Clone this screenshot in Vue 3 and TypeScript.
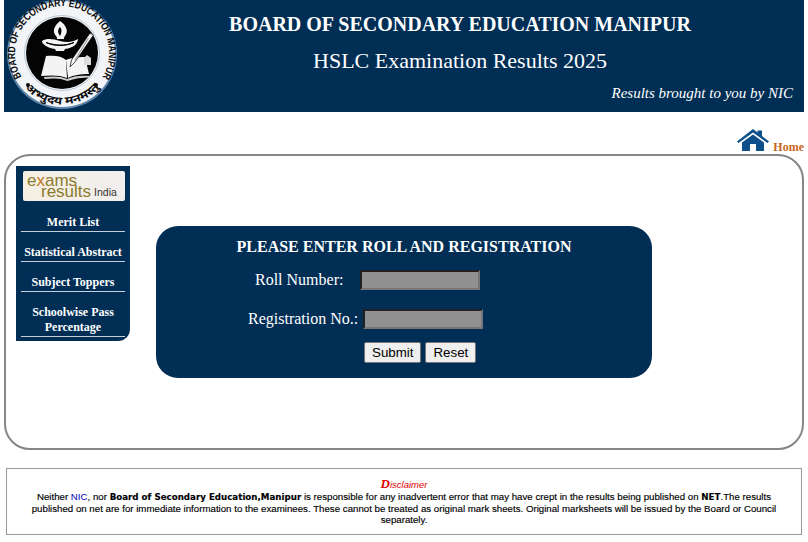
<script setup lang="ts">
const menu: string[] = ['Merit List', 'Statistical Abstract', 'Subject Toppers', 'Schoolwise Pass Percentage']
</script>

<template>
  <div class="page">
    <header class="banner">
      <svg class="crest" width="114" height="110" viewBox="0 0 114 110">
        <defs>
          <path id="arcTop" d="M 17.5 77 A 47 47 0 1 1 98.5 77" />
          <path id="arcBottom" d="M 15 80 A 50 50 0 0 0 101 80" />
        </defs>
        <circle cx="58" cy="54" r="55" fill="#5f86ad" />
        <circle cx="58" cy="54" r="53" fill="#f2f4f7" />
        <circle cx="58" cy="53" r="36" fill="#040404" />
        <circle cx="58" cy="53" r="37.500" fill="none" stroke="#b9c6d6" stroke-width="1" />
        <text fill="#0b0b0b" font-family="Liberation Sans, sans-serif" font-weight="bold" font-size="10.500"><textPath href="#arcTop" textLength="198" lengthAdjust="spacingAndGlyphs">BOARD OF SECONDARY EDUCATION MANIPUR</textPath></text>
        <text fill="#0b0b0b" font-family="Noto Sans, DejaVu Sans, sans-serif" font-weight="bold" font-size="11"><textPath href="#arcBottom" startOffset="10" textLength="84" lengthAdjust="spacingAndGlyphs">अभ्युदय मनमस्तु</textPath></text>
        <circle cx="24" cy="85" r="2" fill="#0b0b0b" />
        <circle cx="92" cy="85" r="2" fill="#0b0b0b" />
        <path d="M56 21c-6 5-8 10-4 15 1 1 1 2 1 3h7c0-1 0-2 1-3 4-5 1-11-5-15z" fill="#f4f4f4" />
        <path d="M56 27c-2 2-3 5 0 9 2-4 2-7 0-9z" fill="#040404" />
        <path d="M38 41c5-3 11-2 18 0s13 1 18-2c0 4-4 9-13 10l-1 2H52l-1-2c-8-1-13-5-13-8z" fill="#f4f4f4" />
        <path d="M42 42.500c8 4 20 4 28 0-6 2-9 2.500-14 2.500s-9-1-14-2.500z" fill="#040404" stroke="#040404" />
        <path d="M42 56c9-1 16 0 20 4l1 18c-7-3-15-3-26-2z" fill="#f4f4f4" />
        <path d="M62 60c4-2 10-3 19-3l4 17c-9 0-15 1-21 4z" fill="#f4f4f4" />
        <path d="M40 77c9-1 17-1 23 2 6-3 14-4 23-3l.5 1.500c-9 0-16 1-23 3.500-7-3-14-3-23-2z" fill="#cfcfcf" />
        <path d="M86 33l3.500 2L71 62l-5 5 1.500-7z" fill="#f4f4f4" stroke="#040404" stroke-width=".7" />
        <path d="M84.500 38 71 60" stroke="#777" stroke-width=".8" fill="none" />
        <path d="M80 58l3-3 4 3v7h-7z" fill="#dcdcdc" />
      </svg>
      <div class="titles">
        <h1>BOARD OF SECONDARY EDUCATION MANIPUR</h1>
        <h2>HSLC Examination Results 2025</h2>
        <p>Results brought to you by NIC</p>
      </div>
    </header>

    <div class="home-row">
      <svg width="32" height="23" viewBox="0 0 32 23">
        <path d="M0 12.500 16 0l4.500 3.500V1.500h4.500v5.500L32 12.500l-1.500 1.500L16 3.500 1.500 14z" fill="#0c4f8a" />
        <path d="M5 13.500 16 5.500l11 8V22H19v-7h-6v7H5z" fill="#0c4f8a" />
      </svg>
      <span class="home-link">Home</span>
    </div>

    <main class="panel">
      <nav class="side">
        <div class="brand">
          <div class="brand-word">
            <span class="w1">e<i class="x">x</i>ams</span>
            <span class="w2">results</span>
          </div>
          <span class="w3">India</span>
        </div>
        <a v-for="m in menu" :key="m" class="side-link">{{ m }}</a>
      </nav>

      <form class="roll-form" @submit.prevent>
        <h3>PLEASE ENTER ROLL AND REGISTRATION</h3>
        <div class="field first">
          <label for="roll">Roll Number:</label>
          <input id="roll" type="text" />
        </div>
        <div class="field second">
          <label for="reg">Registration No.:</label>
          <input id="reg" type="text" />
        </div>
        <div class="actions">
          <button type="submit">Submit</button>
          <button type="reset">Reset</button>
        </div>
      </form>
    </main>

    <footer class="disclaimer">
      <div class="dis-title"><span class="big">D</span>isclaimer</div>
      <p>
        Neither <span class="nic">NIC</span>, nor <b class="wide">Board of Secondary Education,Manipur</b> is responsible for any inadvertent error that may have crept in the results being published on <b class="wide">NET</b>.The results published on net are for immediate information to the examinees. These cannot be treated as original mark sheets. Original marksheets will be issued by the Board or Council separately.
      </p>
    </footer>
  </div>
</template>

<style scoped>
.page {
  width: 808px;
  height: 542px;
  overflow: hidden;
  background: #fff;
  font-family: "Liberation Serif", "Times New Roman", serif;
}
.banner {
  margin: 0 4px;
  height: 112px;
  background: #002e55;
  display: flex;
  color: #fff;
}
.crest {
  flex: none;
}
.titles {
  flex: 1;
  padding-top: 11px;
  text-align: center;
}
h1 {
  margin: 0;
  padding-right: 2px;
  font-size: 20px;
  line-height: 26px;
  font-weight: bold;
}
h2 {
  margin: 10px 0 0;
  padding-right: 2px;
  font-size: 22px;
  line-height: 28px;
  font-weight: normal;
}
.titles p {
  margin: 9px 11px 0 0;
  text-align: right;
  font-size: 15px;
  line-height: 18px;
  font-style: italic;
}
.home-row {
  height: 42px;
  display: flex;
  justify-content: flex-end;
  align-items: flex-end;
  padding-right: 4px;
  gap: 4px;
}
.home-row svg {
  margin-bottom: 2px;
}
.home-link {
  color: #c8651b;
  font-size: 12px;
  font-weight: bold;
  line-height: 14px;
}
.panel {
  margin: 0 4px;
  height: 296px;
  box-sizing: border-box;
  border: 2px solid #888489;
  border-radius: 26px;
  display: flex;
  align-items: flex-start;
  padding: 10px;
}
.side {
  width: 114px;
  height: 175px;
  box-sizing: border-box;
  flex: none;
  background: #002e55;
  border-radius: 0 0 12px 0;
  padding: 5px 5px 0;
  text-align: center;
}
.brand {
  height: 30px;
  margin: 0 0 6px 2px;
  background: linear-gradient(90deg, #f5efe2, #f1efee);
  border-radius: 2px;
  display: flex;
  align-items: flex-end;
  padding-left: 4px;
  box-sizing: border-box;
  font-family: "Liberation Sans", Arial, sans-serif;
}
.brand-word {
  display: flex;
  flex-direction: column;
  text-align: left;
  padding-bottom: 4px;
}
.w1, .w2 {
  color: #8d7a2e;
  font-size: 17px;
  line-height: 11px;
}
.x {
  color: #c2761f;
  font-style: normal;
}
.w2 {
  margin-left: 14px;
}
.w3 {
  color: #333;
  font-size: 10.500px;
  line-height: 10px;
  margin-left: 3px;
  padding-bottom: 4px;
}
.side-link {
  display: block;
  color: #fff;
  font-size: 12px;
  font-weight: bold;
  line-height: 15px;
  padding-top: 8px;
  padding-bottom: 1px;
  margin-bottom: 5px;
  border-bottom: 1px solid #c6d0da;
}
.roll-form {
  width: 496px;
  height: 152px;
  margin: 60px 0 0 26px;
  box-sizing: border-box;
  background: #002e55;
  border-radius: 22px;
  color: #fff;
  padding-top: 12px;
}
h3 {
  margin: 0;
  text-align: center;
  font-size: 16px;
  line-height: 18px;
  font-weight: bold;
}
.field {
  display: flex;
  align-items: center;
  font-size: 16px;
}
.field label {
  line-height: 20px;
}
.first {
  margin-top: 14px;
  padding-left: 99px;
  gap: 17px;
}
.second {
  margin-top: 19px;
  padding-left: 92px;
  gap: 5px;
}
input {
  width: 120px;
  height: 20px;
  box-sizing: border-box;
  background: #919191;
  border: 2px inset #767676;
  padding: 0;
}
.actions {
  margin-top: 13px;
  padding-left: 208px;
  display: flex;
  gap: 4px;
}
button {
  height: 21px;
  padding: 0 7px;
  background: #efefef;
  border: 1px solid #767676;
  border-radius: 2px;
  font-family: "Liberation Sans", Arial, sans-serif;
  font-size: 13.330px;
  color: #000;
}
.disclaimer {
  margin: 18px 6px 0;
  height: 67px;
  box-sizing: border-box;
  border: 1px solid #999;
  padding-top: 8px;
  text-align: center;
  font-family: "Liberation Sans", Arial, sans-serif;
  font-size: 9.700px;
  line-height: 11px;
  color: #000;
}
.dis-title {
  color: #e00000;
  font-family: "Liberation Sans", sans-serif;
  font-style: italic;
  line-height: 13px;
  font-size: 9.500px;
}
.big {
  font-family: "Liberation Serif", serif;
  font-weight: bold;
  font-size: 13px;
}
.disclaimer p {
  margin: 0;
  padding: 0 17px;
  -webkit-text-stroke: .15px #000;
}
.nic {
  color: #0000c0;
  -webkit-text-stroke: 0;
}
.wide {
  font-family: "DejaVu Sans", sans-serif;
  font-size: 8.700px;
}
</style>

<style>
html, body { margin: 0; background: #fff; }
</style>
